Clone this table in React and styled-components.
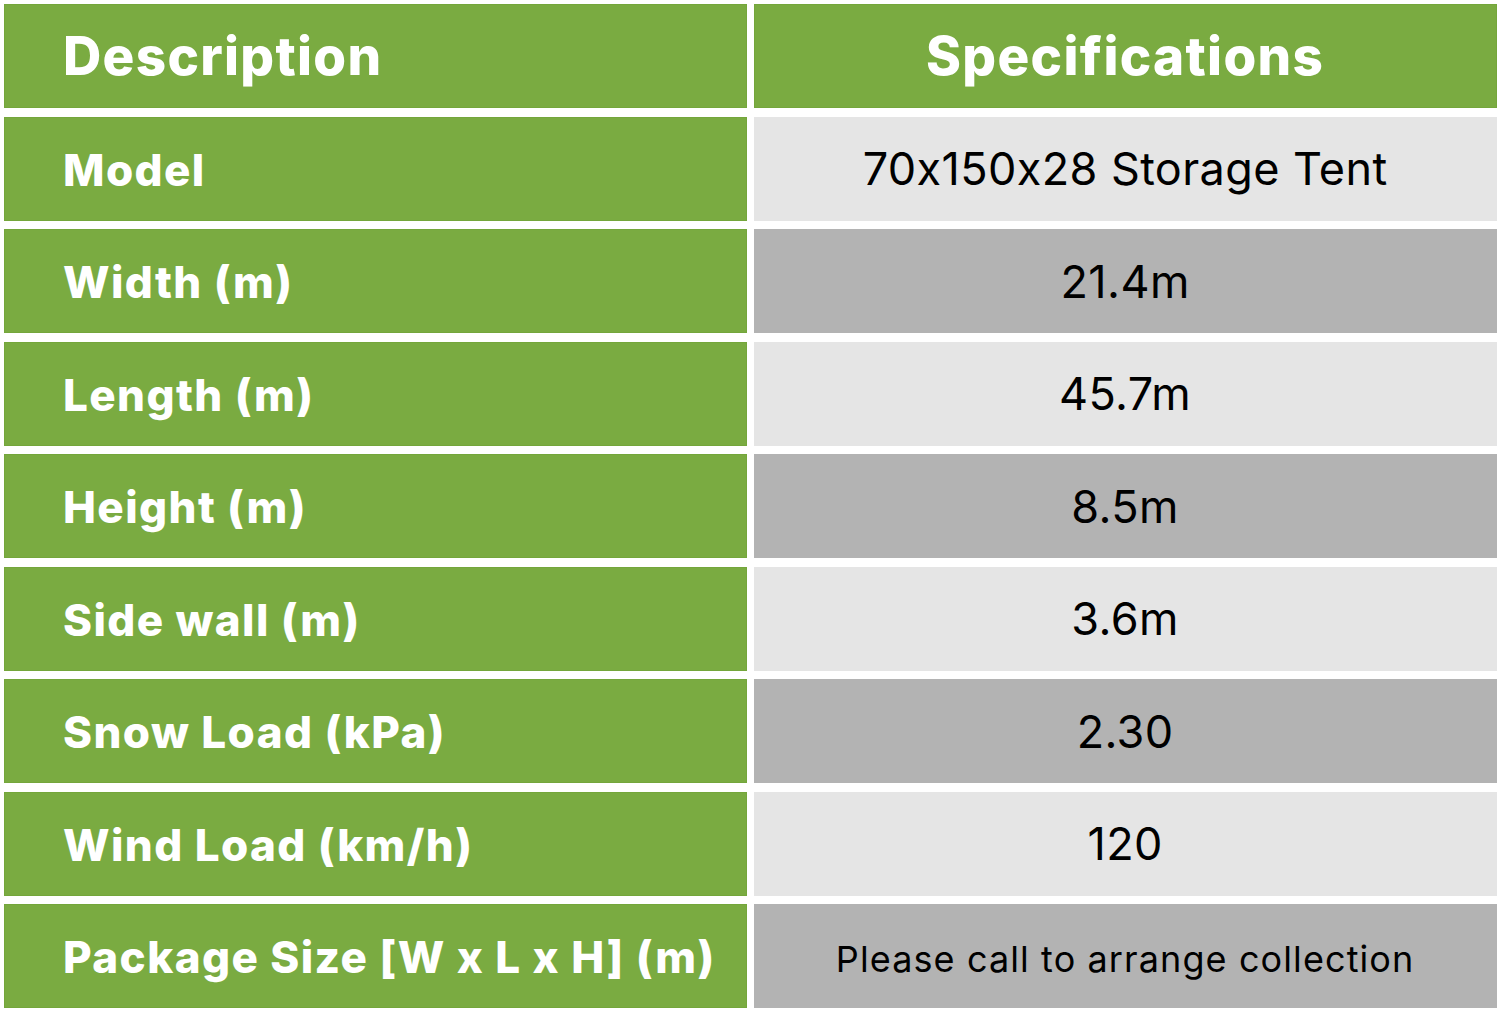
import styled, { createGlobalStyle } from 'styled-components'

const GlobalStyle = createGlobalStyle`
    html, body {
        margin: 0;
        padding: 0;
        background: #ffffff;
    }
    body {
        font-family: Inter, 'Noto Sans', sans-serif;
    }
`

const rows = [
	['Model', '70x150x28 Storage Tent'],
	['Width (m)', '21.4m'],
	['Length (m)', '45.7m'],
	['Height (m)', '8.5m'],
	['Side wall (m)', '3.6m'],
	['Snow Load (kPa)', '2.30'],
	['Wind Load (km/h)', '120'],
	['Package Size [W x L x H] (m)', 'Please call to arrange collection', true],
]

const Table = styled.div`
    display: grid;
    grid-template-columns: 1fr 1fr;
    grid-auto-rows: 104px;
    column-gap: 7px;
    row-gap: 8.5px;
    padding: 4px 3.5px 4px 4px;
    width: 1500px;
    box-sizing: border-box;
`

const Cell = styled.div`
    display: flex;
    align-items: center;
    box-sizing: border-box;
    padding: 0 0 0 59px;
    justify-content: ${p => (p.$center ? 'center' : 'flex-start')};
    ${p => p.$center && 'padding: 0;'}
`

const GreenCell = styled(Cell)`
    background: #7aab41;
    box-shadow: inset 0 0 0 1px #74a63b;
    color: #ffffff;
    font-weight: 800;
`

const ValueCell = styled(Cell)`
    background: ${p => (p.$dark ? '#b3b3b3' : '#e5e5e5')};
    color: #000000;
    font-weight: 400;
`

const HeaderText = styled.span`
    font-size: 53px;
    letter-spacing: 1.3px;
`

const LabelText = styled.span`
    font-size: 44px;
    letter-spacing: 1.4px;
    padding-top: 2px;
`

const ValueText = styled.span`
    font-size: ${p => (p.$small ? '36px' : '45px')};
    letter-spacing: ${p => (p.$small ? '1.1px' : '0.4px')};
    padding-top: ${p => (p.$small ? '6px' : '0')};
`

export default function App() {
	return (
		<>
			<GlobalStyle />
			<Table>
				<GreenCell>
					<HeaderText>Description</HeaderText>
				</GreenCell>
				<GreenCell $center>
					<HeaderText>Specifications</HeaderText>
				</GreenCell>
				{rows.map(([label, value, small], i) => (
					<>
						<GreenCell key={label + 'l'}>
							<LabelText>{label}</LabelText>
						</GreenCell>
						<ValueCell key={label + 'v'} $center $dark={i % 2 === 1}>
							<ValueText $small={small}>{value}</ValueText>
						</ValueCell>
					</>
				))}
			</Table>
		</>
	)
}
